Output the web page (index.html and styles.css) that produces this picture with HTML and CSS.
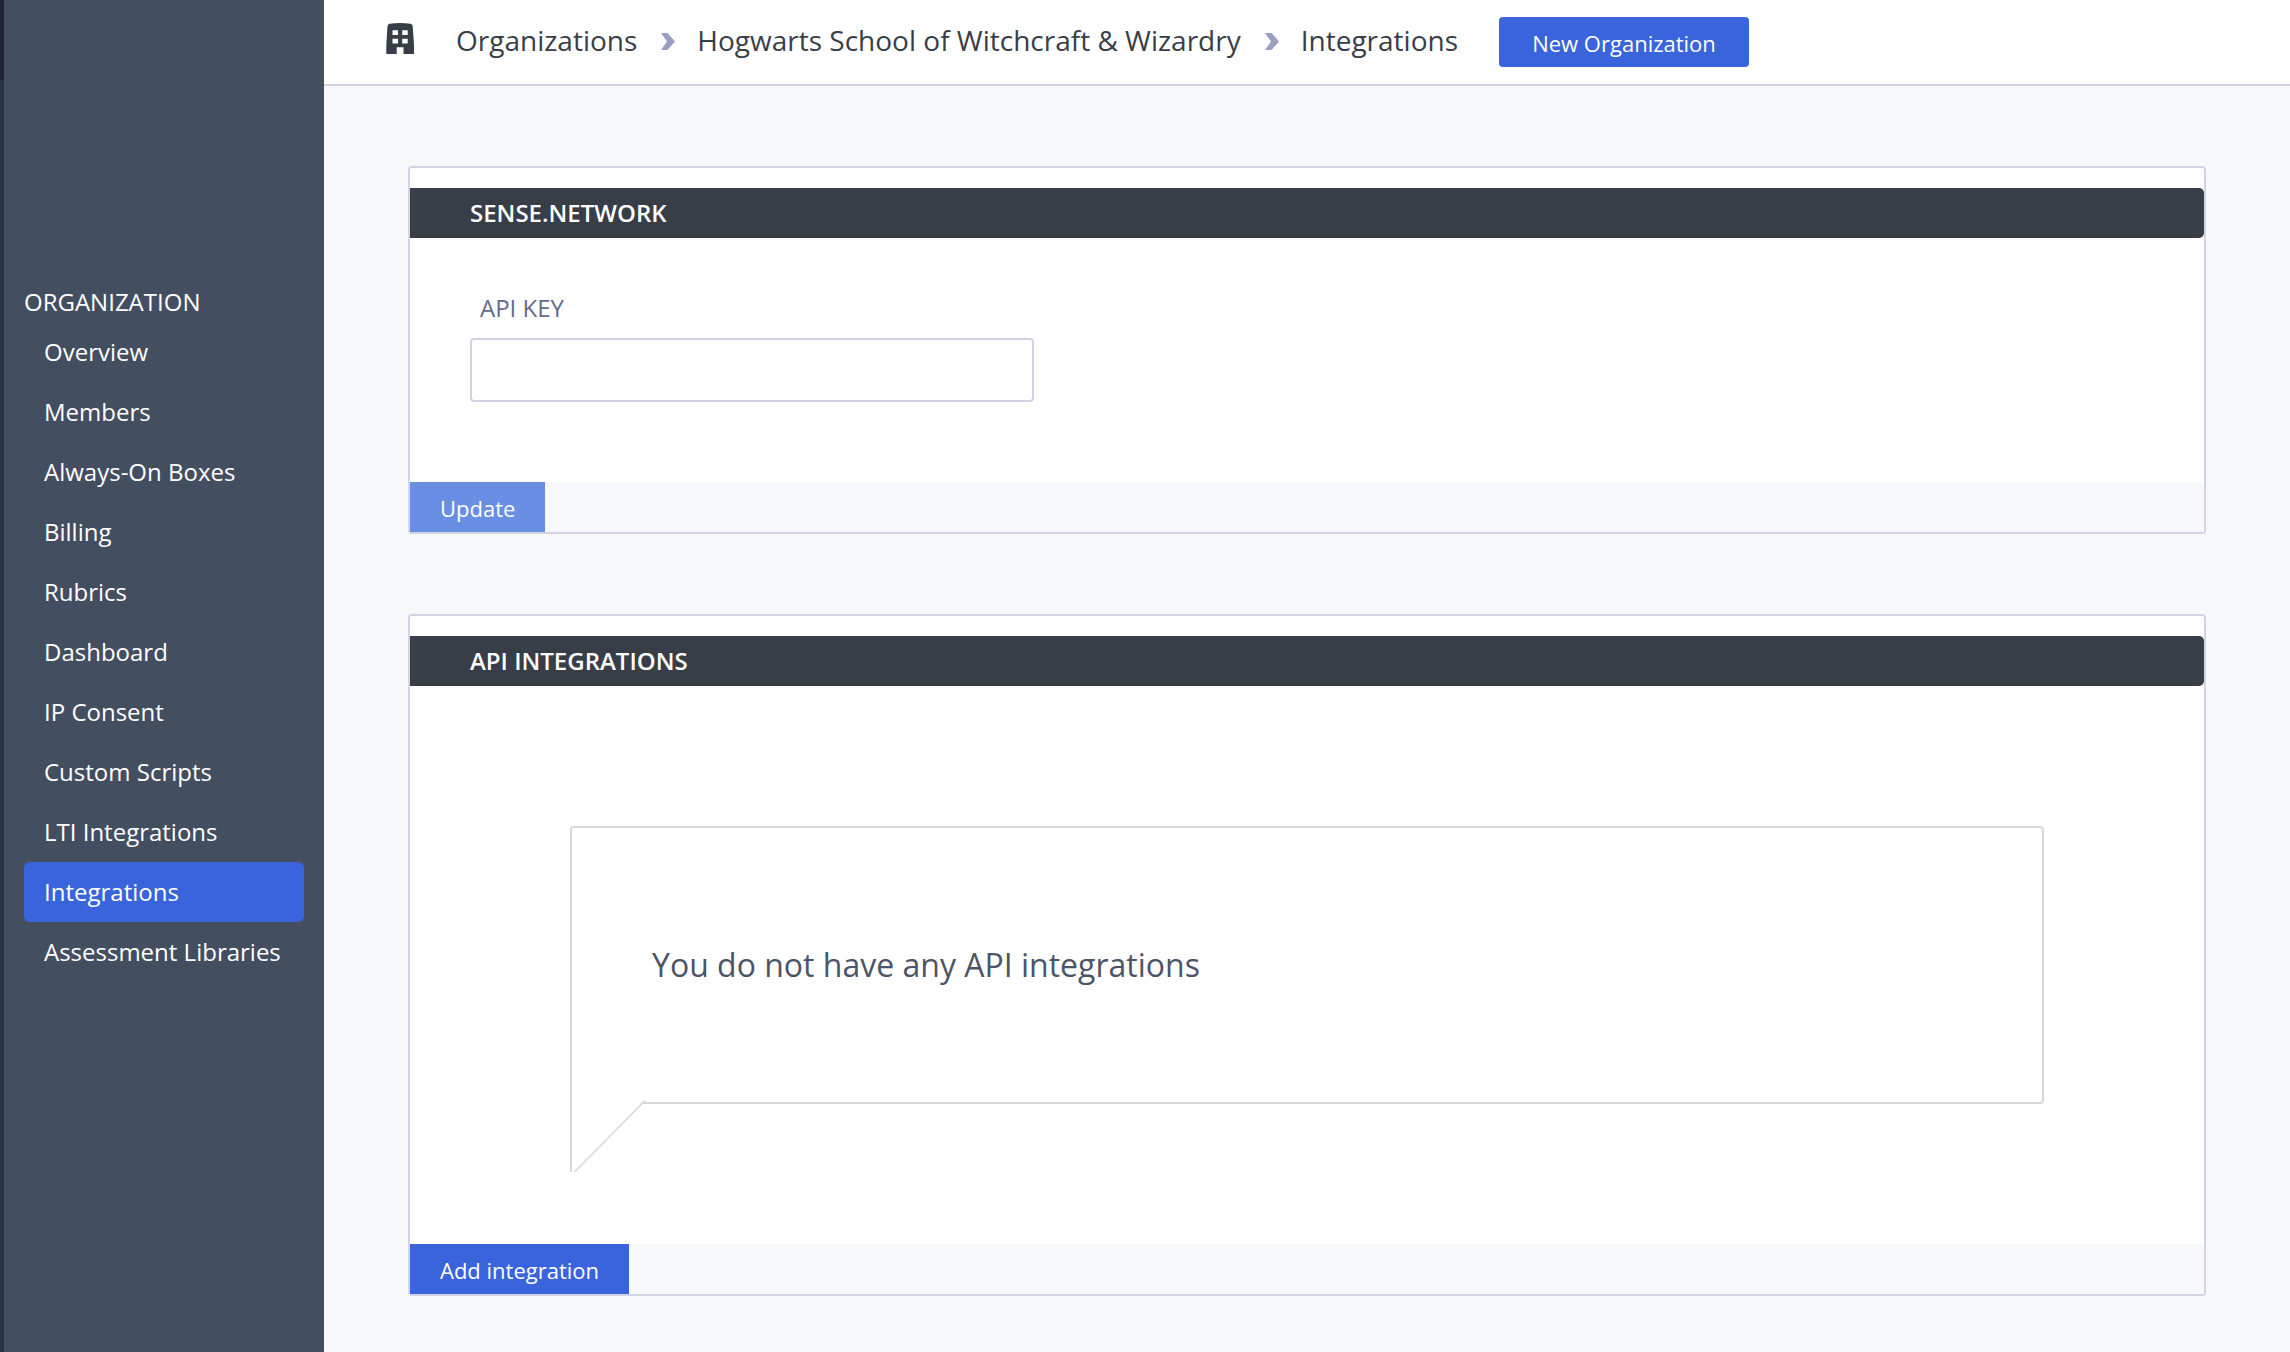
FILE: index.html
```
<!DOCTYPE html>
<html lang="en">
<head>
<meta charset="utf-8">
<title>Integrations</title>
<link rel="stylesheet" href="styles.css">
</head>
<body>
<div class="app">
  <div class="rail"><div class="rail-top"></div></div>
  <nav class="sidebar">
    <div class="sidebar-title">ORGANIZATION</div>
    <a class="nav-item">Overview</a>
    <a class="nav-item">Members</a>
    <a class="nav-item">Always-On Boxes</a>
    <a class="nav-item">Billing</a>
    <a class="nav-item">Rubrics</a>
    <a class="nav-item">Dashboard</a>
    <a class="nav-item">IP Consent</a>
    <a class="nav-item">Custom Scripts</a>
    <a class="nav-item">LTI Integrations</a>
    <a class="nav-item active">Integrations</a>
    <a class="nav-item">Assessment Libraries</a>
  </nav>
  <div class="main">
    <header class="header">
      <svg class="building" width="28" height="31" viewBox="0 0 28 31"><path fill="#383e48" fill-rule="evenodd" d="M.3 31V22L1.500 3Q1.800 1.200 3.700.8Q14-.6 24.500.8Q26.400 1.200 26.700 3L28 22V31H17.500V24.200H10.700V31ZM6.500 7.200V12H12V7.200ZM16.200 7.200V12H21.700V7.200ZM6.500 15.800V20.600H12V15.800ZM16.200 15.800V20.600H21.700V15.800Z"/></svg>
      <div class="crumbs">
        <span>Organizations</span>
        <svg class="chevron" width="14" height="17" viewBox="0 0 14 17"><path fill="#9a9fc2" d="M0 0H6.500L14 8.500L6.500 17H0L6 8.500Z"/></svg>
        <span>Hogwarts School of Witchcraft &amp; Wizardry</span>
        <svg class="chevron" width="14" height="17" viewBox="0 0 14 17"><path fill="#9a9fc2" d="M0 0H6.500L14 8.500L6.500 17H0L6 8.500Z"/></svg>
        <span>Integrations</span>
      </div>
      <button class="btn btn-new">New Organization</button>
    </header>
    <div class="content">
      <section class="card">
        <h2 class="card-title">SENSE.NETWORK</h2>
        <div class="form">
          <label class="label" for="api-key">API KEY</label>
          <input class="input" id="api-key" type="text">
        </div>
        <div class="card-footer"><button class="btn" disabled>Update</button></div>
      </section>
      <section class="card">
        <h2 class="card-title">API INTEGRATIONS</h2>
        <div class="empty">
          <div class="bubble">You do not have any API integrations
            <svg class="tail" width="76" height="72" viewBox="0 0 76 72"><path fill="#fff" d="M2 0H72V2L4 72H2Z"/><path fill="#d8d8d8" d="M0 0H2V72H0Z"/><path fill="none" stroke="#d8d8d8" stroke-width="1.500" d="M4.500 72L75 .5"/></svg>
          </div>
        </div>
        <div class="card-footer"><button class="btn">Add integration</button></div>
      </section>
    </div>
  </div>
</div>
</body>
</html>
```
FILE: styles.css
```
* { box-sizing: border-box; }
body { margin: 0; font-family: "Open Sans", sans-serif; font-size: 24px; color: #383e48; }
.app { display: flex; height: 1352px; overflow: hidden; background: #f6f8fc; }
.rail { width: 4px; background: #273147; }
.rail-top { height: 80px; background: #202535; }
.sidebar { width: 320px; padding: 282px 20px 0; background: #444e61; color: #fff; }
.sidebar-title { line-height: 40px; }
.nav-item { display: block; height: 60px; padding-left: 20px; line-height: 60px; border-radius: 6px; white-space: nowrap; }
.nav-item.active { background: #3964db; }
.main { flex: 1; }
.header { display: flex; align-items: flex-start; height: 86px; padding-left: 62px; background: #fff; border-bottom: 2px solid #d0d4e4; }
.building { margin-top: 23px; }
.crumbs { display: flex; margin-left: 42px; font-size: 28px; line-height: 80px; white-space: nowrap; }
.chevron { margin: 33px 22px 0 24px; }
.btn { height: 50px; padding: 3px 30px 0; border: 0; background: #3964db; color: #fff; font: 22px/47px "Open Sans", sans-serif; }
.btn:disabled { background: #698fe5; }
.btn-new { width: 250px; margin: 17px 0 0 41px; border-radius: 4px; }
.content { padding: 80px 84px 0; }
.card { margin-bottom: 80px; padding-top: 20px; background: #fff; border: 2px solid #d0d4e4; border-radius: 4px; }
.card-title { height: 50px; margin: 0; padding-left: 60px; border-radius: 0 5px 5px 0; background: #383e48; color: #fff; font-size: 24px; font-weight: 600; line-height: 50px; }
.form { height: 244px; padding: 50px 60px 0; }
.label { display: block; height: 50px; padding-left: 10px; color: #626c8b; line-height: 40px; }
.input { display: block; width: 564px; height: 64px; border: 2px solid #d0d4e4; border-radius: 4px; background: #fff; }
.card-footer { display: flex; height: 50px; background: #f6f8fc; }
.empty { height: 558px; padding: 140px 160px 0; }
.bubble { position: relative; height: 278px; padding-left: 80px; border: 2px solid #d8d8d8; border-radius: 4px; color: #4c5467; font-size: 32px; line-height: 274px; }
.tail { position: absolute; left: -2px; top: 272px; }
```
